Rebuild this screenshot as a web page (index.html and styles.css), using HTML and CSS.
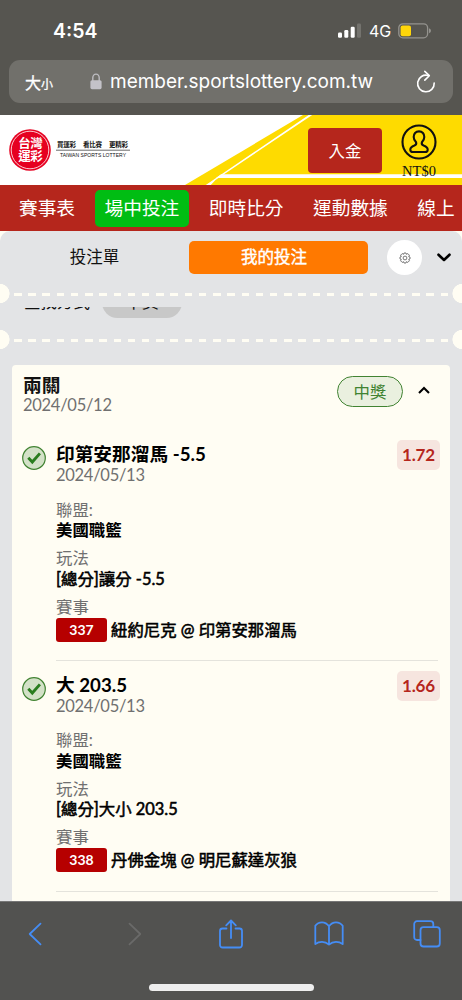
FILE: index.html
```html
<!DOCTYPE html>
<html lang="zh-Hant">
<head>
<meta charset="utf-8">
<meta name="viewport" content="width=device-width, initial-scale=1">
<title>台灣運彩</title>
<link rel="stylesheet" href="styles.css">
</head>
<body>
<div class="phone">
  <header class="browser">
    <div class="status">
      <span class="time">4:54</span>
      <div class="status-right">
        <svg class="signal" width="24" height="16" viewBox="0 0 24 16"><rect x="0" y="9.5" width="4" height="5.3" rx="1.2" fill="#fff"/><rect x="6.3" y="7" width="4" height="7.8" rx="1.2" fill="#fff"/><rect x="12.7" y="3.8" width="4" height="11" rx="1.2" fill="#fff"/><rect x="19" y=".5" width="4" height="14.3" rx="1.2" fill="#74736e"/></svg>
        <span class="net">4G</span>
        <svg class="battery" width="34" height="16" viewBox="0 0 34 16"><rect x=".8" y=".8" width="28.8" height="14" rx="4" fill="none" stroke="#94938e" stroke-width="1.3"/><rect x="2.6" y="2.5" width="10.4" height="10.7" rx="2" fill="#ffd60a"/><path d="M31 5.3q2 .6 2 2.5t-2 2.5z" fill="#94938e"/></svg>
      </div>
    </div>
    <div class="address">
      <span class="textsize">大<small>小</small></span>
      <svg class="lock" width="12" height="17" viewBox="0 0 12 17"><path d="M2.8 8V4.8a3.2 3.7 0 0 1 6.4 0V8" fill="none" stroke="#bdbcc1" stroke-width="1.4"/><rect x=".4" y="7.2" width="11.2" height="9" rx="1.6" fill="#c3c2c8"/></svg>
      <span class="url">member.sportslottery.com.tw</span>
      <svg class="reload" width="20" height="23" viewBox="0 0 20 23" fill="none" stroke="#fff" stroke-width="1.6" stroke-linecap="round" stroke-linejoin="round"><path d="M12.2 5.5A8.3 8.3 0 1 0 18.2 13"/><path d="M8.8 1.4l4.5 4.3-4.5 4.4"/></svg>
    </div>
  </header>

  <div class="banner">
    <svg class="stripes" width="462" height="70" viewBox="0 0 462 70"><path d="M303 0H462V70H185z" fill="#fedb00"/><path d="M308.7 0h3.5L215.5 65 210.8 70h-5z" fill="#fff"/><path d="M221 59.3H462v3.8H216z" fill="#fff"/></svg>
    <svg class="logo" width="122" height="44" viewBox="0 0 122 44">
      <circle cx="21" cy="22" r="20.8" fill="#e60020"/><circle cx="21" cy="22" r="18.8" fill="none" stroke="#fff" stroke-width=".8"/>
      <text class="seal" x="9.2" y="20.2" textLength="24.5">台灣</text><text class="seal" x="9.2" y="33" textLength="24.5">運彩</text>
      <text class="slogan" x="48" y="18.600" textLength="19">買運彩</text><text class="slogan" x="74" y="18.600" textLength="19">看比賽</text><text class="slogan" x="100" y="18.600" textLength="19">更精彩</text>
      <path d="M47 22.2h74" stroke="#444" stroke-width=".8"/>
      <text class="english" x="51" y="28.8" textLength="66">TAIWAN SPORTS LOTTERY</text>
    </svg>
    <button class="deposit">入金</button>
    <div class="account">
      <svg width="36" height="36" viewBox="0 0 36 36" fill="none" stroke="#111" stroke-width="2.1"><circle cx="18" cy="18" r="16.5"/><path d="M18 7.4c-3.4 0-5.3 2.4-5.3 5.5 0 2.4 1.1 4 2.4 5.4.5 1.5-.1 2.5-1.7 3.1-2.6.9-4.1 1.6-4.1 4.3 0 1.6 1 2.3 2.7 2.3h12c1.7 0 2.7-.7 2.7-2.3 0-2.7-1.500-3.400-4.100-4.300-1.600-.6-2.200-1.600-1.700-3.100 1.300-1.400 2.400-3 2.400-5.400 0-3.100-1.900-5.500-5.300-5.500z"/></svg>
      <span class="balance">NT$0</span>
    </div>
  </div>

  <nav class="nav">
    <a>賽事表</a><a class="active">場中投注</a><a>即時比分</a><a>運動數據</a><a>線上</a>
  </nav>

  <main class="page">
    <section class="panel">
      <div class="tabs">
        <span class="tab">投注單</span>
        <span class="tab selected">我的投注</span>
        <span class="gear"><svg width="12" height="12" viewBox="0 0 12 12" fill="none" stroke="#555" stroke-width=".8"><path d="M5 1h2l.4 1.300 1.400-.7L10.400 3.200 9.700 4.600 11 5v2l-1.300.4.7 1.400-1.600 1.600-1.400-.7L7 11H5l-.4-1.300-1.400.7L1.600 8.800l.7-1.400L1 7V5l1.300-.4-.7-1.400L3.200 1.600l1.400.7z"/><circle cx="6" cy="6" r="1.900"/></svg></span>
        <svg class="down" width="14" height="9" viewBox="0 0 14 9" fill="none" stroke="#000" stroke-width="2.600" stroke-linecap="round" stroke-linejoin="round"><path d="M1.500 1.700L7 7l5.500-5.300"/></svg>
      </div>
      <div class="perforation"></div>
      <div class="filter-clip"><div class="filter"><span>查找方式</span><span class="chip">中獎</span></div></div>
      <div class="perforation"></div>

      <article class="card">
        <div class="card-head">
          <div><h2>兩關</h2><p class="date">2024/05/12</p></div>
          <span class="won">中獎</span>
          <svg width="12" height="8" viewBox="0 0 12 8" fill="none" stroke="#000" stroke-width="2.100"><path d="M1 7l5-5 5 5"/></svg>
        </div>
        <section class="leg">
          <svg class="check" width="24" height="24" viewBox="0 0 24 24"><circle cx="12" cy="12" r="11.300" fill="#d3e1c7" stroke="#418332" stroke-width="1.200"/><path d="M6.300 11.800l4 4.200 7.600-8.600" fill="none" stroke="#2a7d1e" stroke-width="2.900"/></svg>
          <div class="leg-body">
            <div class="leg-title"><h3>印第安那溜馬 -5.5</h3><span class="odds">1.72</span></div>
            <p class="date">2024/05/13</p>
            <dl>
              <dt>聯盟:</dt><dd class="strong">美國職籃</dd>
              <dt>玩法</dt><dd>[總分]讓分 -5.5</dd>
              <dt>賽事</dt><dd class="match"><span class="number">337</span><span>紐約尼克 @ 印第安那溜馬</span></dd>
            </dl>
          </div>
        </section>
        <section class="leg">
          <svg class="check" width="24" height="24" viewBox="0 0 24 24"><circle cx="12" cy="12" r="11.300" fill="#d3e1c7" stroke="#418332" stroke-width="1.200"/><path d="M6.300 11.800l4 4.200 7.600-8.600" fill="none" stroke="#2a7d1e" stroke-width="2.900"/></svg>
          <div class="leg-body">
            <div class="leg-title"><h3>大 203.5</h3><span class="odds">1.66</span></div>
            <p class="date">2024/05/13</p>
            <dl>
              <dt>聯盟:</dt><dd class="strong">美國職籃</dd>
              <dt>玩法</dt><dd>[總分]大小 203.5</dd>
              <dt>賽事</dt><dd class="match"><span class="number">338</span><span>丹佛金塊 @ 明尼蘇達灰狼</span></dd>
            </dl>
          </div>
        </section>
      </article>
    </section>
  </main>

  <footer class="toolbar">
    <div class="tools">
      <span><svg width="14" height="24" viewBox="0 0 14 24"><path d="M12.500 1.700L1.700 12l10.800 10.300"/></svg></span>
      <span><svg class="disabled" width="14" height="24" viewBox="0 0 14 24"><path d="M1.500 1.700L12.300 12 1.500 22.300"/></svg></span>
      <span><svg width="26" height="30" viewBox="0 0 26 30"><path d="M8.500 9.500H4.500a2.500 2.500 0 0 0-2.500 2.500v14a2.500 2.500 0 0 0 2.500 2.500h17A2.500 2.500 0 0 0 24 26V12a2.500 2.500 0 0 0-2.500-2.500h-4M13 19V1.700M8.200 6.300L13 1.500l4.800 4.800"/></svg></span>
      <span><svg width="30" height="26" viewBox="0 0 30 26"><path d="M15 5.200C13 2.300 10.800 1.300 8 1.300S3 2.300 1.300 4.800v18.300c2-1.600 4-2.300 6.700-2.300s5 1 7 2.800c2-1.800 4.300-2.800 7-2.800s4.700.7 6.700 2.300V4.800C27 2.300 24.800 1.300 22 1.300S17 2.300 15 5.200zv18.400"/></svg></span>
      <span><svg width="28" height="28" viewBox="0 0 28 28"><rect x="7.500" y="7.200" width="19.300" height="19.300" rx="3"/><path d="M7.500 20H4a2.800 2.800 0 0 1-2.800-2.800V4A2.800 2.800 0 0 1 4 1.200h13.500A2.800 2.800 0 0 1 20.300 4v3.200"/></svg></span>
    </div>
    <div class="home"></div>
  </footer>
</div>
</body>
</html>
```
FILE: styles.css
```css
* { box-sizing: border-box; }
body { margin: 0; font-family: Lato, "Noto Sans CJK TC", sans-serif; color: #111; }
h2, h3, p, dl, dd { margin: 0; }
svg { display: block; flex: none; }
.phone { width: 462px; height: 1000px; overflow: hidden; display: flex; flex-direction: column; background: #fffdf3; }

.browser { height: 115px; flex: none; background: #565550; color: #fff; font-family: Inter, "Noto Sans CJK TC", sans-serif; }
.status { height: 60px; padding: 0 30px 0 53px; display: flex; align-items: center; justify-content: space-between; }
.time { font-size: 19.5px; font-weight: 600; line-height: 24px; padding-top: 2px; }
.status-right { display: flex; align-items: center; padding-top: 2px; }
.net { font-size: 16px; line-height: 20px; width: 22px; margin: 0 7px 0 7px; }
.address { height: 43px; margin: 0 9px; padding: 0 17px 0 16px; display: flex; align-items: center; border-radius: 11px; background: #71706b; }
.textsize { flex: none; width: 65px; font-size: 16px; white-space: nowrap; -webkit-text-stroke: .3px #fff; }
.textsize small { font-size: 12px; }
.lock { margin-right: 8px; }
.url { flex: 1; font-size: 19px; line-height: 24px; white-space: nowrap; }

.banner { height: 70px; flex: none; display: grid; grid-template-columns: 299px 83px 1fr; align-items: start; padding-left: 9px; background: #fff; }
.banner > * { grid-row: 1; }
.stripes { grid-column: 1 / -1; margin-left: -9px; }
.logo { grid-column: 1; margin-top: 13px; }
.seal { font: 700 12.5px "Noto Sans CJK TC", sans-serif; fill: #fff; }
.slogan { font: 700 6.500px "Noto Sans CJK TC", sans-serif; fill: #111; }
.english { font: 5px "Liberation Sans", sans-serif; fill: #111; }
.deposit { grid-column: 2; width: 74px; height: 45px; margin: 13px 0 0; padding: 0; border: 0; border-radius: 4px; background: #b5261c; color: #fff; font: 16.400px/45px "Noto Sans CJK TC", sans-serif; }
.account { grid-column: 3; width: 56px; margin-top: 9px; display: flex; flex-direction: column; align-items: center; }
.balance { font: 14.500px/18px "Liberation Serif", serif; padding-top: 2px; }

.nav { height: 46px; flex: none; display: flex; align-items: center; gap: 9.500px; padding-left: 9px; background: #b5261c; overflow: hidden; }
.nav a { flex: none; padding: 0 10px; border-radius: 5px; font-size: 18.700px; line-height: 37px; color: #fff; }
.nav .active { background: #00bd13; }

.page { flex: 1; min-height: 0; overflow: hidden; }
.panel { height: 700px; border-radius: 10px 10px 0 0; background: #e3e4e6; }
.tabs { height: 53px; display: flex; align-items: center; }
.tab { width: 179px; margin-left: 5px; height: 33px; border-radius: 5px; text-align: center; font-size: 16.500px; line-height: 33px; }
.tab.selected { background: #ff7900; color: #fff; padding-right: 9px; -webkit-text-stroke: .4px #fff; }
.gear { width: 35px; height: 35px; margin: 0 15px 0 19px; border-radius: 50%; background: #fff; display: flex; align-items: center; justify-content: center; }
.perforation { height: 19px; background:
  radial-gradient(circle at 0 50%, #fffdf3 9.300px, transparent 9.800px),
  radial-gradient(circle at 100% 50%, #fffdf3 9.300px, transparent 9.800px),
  repeating-linear-gradient(90deg, #fffdf3 0 7.500px, transparent 7.500px 14.220px) 14.300px 9px / 434px 3px no-repeat; }
.filter-clip { height: 27px; padding-top: 4px; }
.filter { height: 23px; overflow: hidden; display: flex; align-items: flex-start; gap: 12px; padding-left: 24px; font-size: 16.500px; line-height: 31px; }
.filter span { flex: none; margin-top: -20px; }
.filter .chip { width: 80px; height: 31px; border-radius: 16px; text-align: center; background: #c8c8c8; }

.card { height: 560px; margin: 16px 12px 0; border-radius: 4px; padding: 10px 12px 0 11px; background: #fffdf3; }
.card-head { height: 64px; display: flex; align-items: flex-start; }
.card-head > div { flex: 1; }
.card-head > svg { margin: 11px 8px 0 15px; }
h2 { font-size: 18.700px; line-height: 20px; }
.date { font-size: 16.500px; line-height: 20px; letter-spacing: -.28px; color: #707070; }
.won { width: 66px; height: 31px; margin-top: 1px; border: 1.300px solid #418332; border-radius: 16px; background: #eaf0df; color: #418332; text-align: center; font-size: 16.400px; line-height: 29px; }
.leg { height: 230.500px; display: flex; }
.check { margin: 7px 10px 0 -1px; }
.leg-body { flex: 1; height: 222px; border-bottom: 1.500px solid #e4e3dc; }
.leg-title { height: 26px; display: flex; justify-content: space-between; }
h3 { font-size: 18.700px; line-height: 31px; font-weight: 700; white-space: nowrap; color: #000; }
.odds { width: 43px; height: 30px; margin: 1px -2px 0 0; border-radius: 5px; background: #f6e5df; color: #b5261c; text-align: center; font-size: 17px; line-height: 30px; font-weight: 700; letter-spacing: -.2px; }
dl { margin-top: 14.500px; font-size: 16.400px; line-height: 20px; }
dt { color: #707070; height: 20px; }
dd { height: 28.600px; padding-top: .5px; white-space: nowrap; color: #000; -webkit-text-stroke: .55px #000; }
.strong { font-weight: 700; -webkit-text-stroke: 0; }
.match { display: flex; align-items: center; gap: 4px; height: 26px; }
.number { width: 51px; height: 24px; border-radius: 3px; background: #b60000; color: #fff; text-align: center; font-size: 14px; line-height: 24px; font-weight: 700; -webkit-text-stroke: 0; }

.toolbar { height: 99px; flex: none; border-top: 1px solid #777; background: #525250; }
.tools { height: 64px; display: grid; grid-template-columns: repeat(5, 98px); align-items: center; justify-items: center; margin-left: -14px; }
.tools svg { fill: none; stroke: #458df5; stroke-width: 1.800; stroke-linecap: round; stroke-linejoin: round; }
.tools .disabled { margin-left: 3px; stroke: #6a6a69; }
.home { width: 165px; height: 7px; margin: 18px auto 0; border-radius: 4px; background: #eee; }
```
